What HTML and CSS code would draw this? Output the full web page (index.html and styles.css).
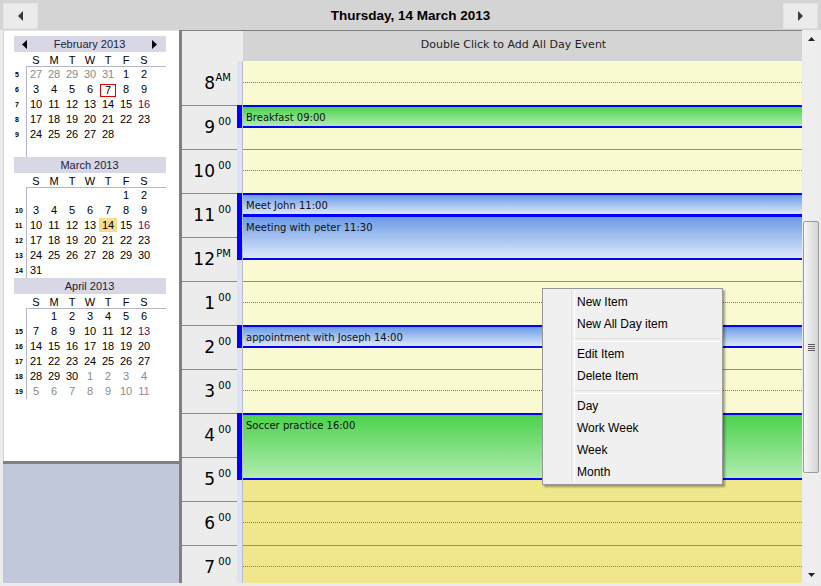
FILE: index.html
```html
<!DOCTYPE html>
<html>
<head>
<meta charset="utf-8">
<link rel="stylesheet" href="styles.css">
</head>
<body>
<div class="app">
  <div class="topbar">
    <div class="navbtn"><svg width="6" height="10" viewBox="0 0 6 10"><polygon points="5,0 5,10 0,5" fill="#3a3a3a"/></svg></div>
    <div class="title">Thursday, 14 March 2013</div>
    <div class="navbtn"><svg width="6" height="10" viewBox="0 0 6 10"><polygon points="0,0 0,10 5,5" fill="#3a3a3a"/></svg></div>
  </div>
  <div class="main">
    <div class="side">
      <div class="calpanel">
        <div class="month">
          <div class="mhead">
            <svg class="marrow" width="5" height="9" viewBox="0 0 5 9"><polygon points="5,0 5,9 0,4.5" fill="#000"/></svg>
            <span class="mtitle">February 2013</span>
            <svg class="marrow" width="5" height="9" viewBox="0 0 5 9"><polygon points="0,0 0,9 5,4.5" fill="#000"/></svg>
          </div>
          <div class="mnames"><span></span><span>S</span><span>M</span><span>T</span><span>W</span><span>T</span><span>F</span><span>S</span></div>
          <div class="mbody">
            <div class="wks"><span>5</span><span>6</span><span>7</span><span>8</span><span>9</span><span></span></div>
            <div class="days">
              <span class="g">27</span><span class="g">28</span><span class="g">29</span><span class="g">30</span><span class="g">31</span><span>1</span><span>2</span>
              <span>3</span><span>4</span><span>5</span><span>6</span><span class="today">7</span><span>8</span><span>9</span>
              <span>10</span><span>11</span><span>12</span><span>13</span><span>14</span><span>15</span><span class="p">16</span>
              <span>17</span><span>18</span><span>19</span><span>20</span><span>21</span><span>22</span><span>23</span>
              <span>24</span><span>25</span><span>26</span><span>27</span><span>28</span>
            </div>
          </div>
        </div>
        <div class="month">
          <div class="mhead"><span class="mtitle">March 2013</span></div>
          <div class="mnames"><span></span><span>S</span><span>M</span><span>T</span><span>W</span><span>T</span><span>F</span><span>S</span></div>
          <div class="mbody">
            <div class="wks"><span></span><span>10</span><span>11</span><span>12</span><span>13</span><span>14</span></div>
            <div class="days">
              <span></span><span></span><span></span><span></span><span></span><span>1</span><span>2</span>
              <span>3</span><span>4</span><span>5</span><span>6</span><span>7</span><span>8</span><span>9</span>
              <span>10</span><span>11</span><span>12</span><span>13</span><span class="sel">14</span><span>15</span><span class="p">16</span>
              <span>17</span><span>18</span><span>19</span><span>20</span><span>21</span><span>22</span><span>23</span>
              <span>24</span><span>25</span><span>26</span><span>27</span><span>28</span><span>29</span><span>30</span>
              <span>31</span>
            </div>
          </div>
        </div>
        <div class="month">
          <div class="mhead"><span class="mtitle">April 2013</span></div>
          <div class="mnames"><span></span><span>S</span><span>M</span><span>T</span><span>W</span><span>T</span><span>F</span><span>S</span></div>
          <div class="mbody">
            <div class="wks"><span></span><span>15</span><span>16</span><span>17</span><span>18</span><span>19</span></div>
            <div class="days">
              <span></span><span>1</span><span>2</span><span>3</span><span>4</span><span>5</span><span>6</span>
              <span>7</span><span>8</span><span>9</span><span>10</span><span>11</span><span>12</span><span class="p">13</span>
              <span>14</span><span>15</span><span>16</span><span>17</span><span>18</span><span>19</span><span>20</span>
              <span>21</span><span>22</span><span>23</span><span>24</span><span>25</span><span>26</span><span>27</span>
              <span>28</span><span>29</span><span>30</span><span class="g">1</span><span class="g">2</span><span class="g">3</span><span class="gb">4</span>
              <span class="g">5</span><span class="g">6</span><span class="g">7</span><span class="g">8</span><span class="g">9</span><span class="g">10</span><span class="gp">11</span>
            </div>
          </div>
        </div>
      </div>
      <div class="hsplit"></div>
      <div class="sidefill"></div>
    </div>
    <div class="vsplit"></div>
    <div class="dayview">
      <div class="dv">
        <div class="dvhead">
          <div class="dvh-time"></div>
          <div class="dvh-day">Double Click to Add All Day Event</div>
        </div>
        <div class="dvbody">
          <div class="timecol">
            <div class="tslot first"><span class="num">8</span><span class="suf">AM</span></div>
            <div class="tslot"><span class="num">9</span><span class="suf">00</span></div>
            <div class="tslot"><span class="num">10</span><span class="suf">00</span></div>
            <div class="tslot"><span class="num">11</span><span class="suf">00</span></div>
            <div class="tslot"><span class="num">12</span><span class="suf">PM</span></div>
            <div class="tslot"><span class="num">1</span><span class="suf">00</span></div>
            <div class="tslot"><span class="num">2</span><span class="suf">00</span></div>
            <div class="tslot"><span class="num">3</span><span class="suf">00</span></div>
            <div class="tslot"><span class="num">4</span><span class="suf">00</span></div>
            <div class="tslot"><span class="num">5</span><span class="suf">00</span></div>
            <div class="tslot"><span class="num">6</span><span class="suf">00</span></div>
            <div class="tslot"><span class="num">7</span><span class="suf">00</span></div>
          </div>
          <div class="strip">
            <div class="mark" style="top:44px;height:23px"></div>
            <div class="mark" style="top:132px;height:67px"></div>
            <div class="mark" style="top:264px;height:23px"></div>
            <div class="mark" style="top:352px;height:67px"></div>
          </div>
          <div class="daycol">
            <div class="dslot first"><div class="half"></div></div>
            <div class="dslot"><div class="half"></div></div>
            <div class="dslot"><div class="half"></div></div>
            <div class="dslot"><div class="half"></div></div>
            <div class="dslot"><div class="half"></div></div>
            <div class="dslot"><div class="half"></div></div>
            <div class="dslot"><div class="half"></div></div>
            <div class="dslot"><div class="half"></div></div>
            <div class="dslot"><div class="half"></div></div>
            <div class="dslot off"><div class="half"></div></div>
            <div class="dslot off"><div class="half"></div></div>
            <div class="dslot off"><div class="half"></div></div>
            <div class="ev green" style="top:44px;height:23px">Breakfast 09:00</div>
            <div class="ev blue" style="top:132px;height:23px">Meet John 11:00</div>
            <div class="ev blue" style="top:154px;height:45px">Meeting with peter 11:30</div>
            <div class="ev blue" style="top:264px;height:23px">appointment with Joseph 14:00</div>
            <div class="ev green" style="top:352px;height:67px">Soccer practice 16:00</div>
          </div>
        </div>
      </div>
      <div class="scrollbar">
        <div class="sbbtn"><svg width="7" height="4" viewBox="0 0 7 4"><polygon points="0,4 7,4 3.5,0" fill="#222"/></svg></div>
        <div class="thumb"><div class="grip"></div></div>
        <div class="sbbtn down"><svg width="7" height="4" viewBox="0 0 7 4"><polygon points="0,0 7,0 3.5,4" fill="#222"/></svg></div>
      </div>
    </div>
  </div>
  <div class="menu">
    <div class="mi">New Item</div>
    <div class="mi">New All Day item</div>
    <div class="msep"></div>
    <div class="mi">Edit Item</div>
    <div class="mi">Delete Item</div>
    <div class="msep"></div>
    <div class="mi">Day</div>
    <div class="mi">Work Week</div>
    <div class="mi">Week</div>
    <div class="mi">Month</div>
  </div>
</div>
</body>
</html>
```

FILE: styles.css
```css
* { box-sizing: border-box; }
body { margin: 0; background: #ececec; }
.app {
  position: relative;
  width: 821px;
  height: 586px;
  overflow: hidden;
  background: #ececec;
  font-family: "Liberation Sans", Arial, sans-serif;
  color: #000;
}

/* top bar */
.topbar {
  height: 30px;
  background: #d4d4d4;
  display: flex;
  align-items: flex-start;
  padding: 3px 3px 0 3px;
}
.navbtn {
  width: 35px;
  height: 26px;
  background: #ebebeb;
  border: 1px solid #e2e2e2;
  display: flex;
  align-items: center;
  justify-content: center;
}
.title {
  flex: 1;
  text-align: center;
  font-weight: bold;
  font-size: 13.5px;
  line-height: 26px;
}

/* main */
.main {
  height: 553px;
  display: flex;
  padding: 0 2px 0 3px;
}
.side {
  width: 176px;
  display: flex;
  flex-direction: column;
}
.calpanel {
  height: 431px;
  background: #fff;
  border-left: 1px solid #d6d6d6;
  border-top: 1px solid #e4e4e4;
  padding-top: 5px;
  padding-left: 10px;
}
.hsplit { height: 3px; background: #808080; }
.sidefill { flex: 1; background: #c0c8da; }
.vsplit { width: 3px; background: #808080; }

/* mini calendar */
.month { width: 152px; font-size: 11px; }
.mhead {
  height: 16px;
  background: #d7d7e5;
  display: flex;
  align-items: center;
  justify-content: center;
  padding: 0 9px 0 8px;
  color: #1c1c3a;
}
.mhead .mtitle { flex: 1; text-align: center; line-height: 16px; }
.marrow { display: block; }
.mnames {
  height: 14px;
  display: grid;
  grid-template-columns: 13px repeat(7, 18px);
  line-height: 16px;
  text-align: center;
}
.mbody { display: flex; }
.wks {
  width: 12px;
  padding-top: 1px;
  display: flex;
  flex-direction: column;
}
.wks span {
  height: 15px;
  line-height: 15px;
  font-size: 7px;
  font-weight: bold;
  padding-left: 1px;
}
.days {
  width: 140px;
  height: 91px;
  border-top: 1px solid #b4b4ca;
  border-left: 1px solid #b4b4ca;
  display: grid;
  grid-template-columns: repeat(7, 18px);
  grid-auto-rows: 15px;
  align-content: start;
}
.days span { line-height: 15px; text-align: center; }
.days .g { color: #8a8a8a; }
.days .gb { color: #7c8aa4; }
.days .gp { color: #a080a0; }
.days .p { color: #5c0a5c; }
.days .today {
  border: 1px solid #e00000;
  margin: 2px 1px 0 1px;
  line-height: 11px;
}
.days .sel { background: #f6dc8e; height: 14px; line-height: 15px; }

/* day view */
.dayview { flex: 1; display: flex; }
.dv {
  flex: 1;
  display: flex;
  flex-direction: column;
  border-top: 1px solid #808080;
}
.dvhead { height: 30px; display: flex; }
.dvh-time { width: 61px; background: #ececec; }
.dvh-day {
  flex: 1;
  background: #d4d4d4;
  font-family: "DejaVu Sans", Verdana, sans-serif;
  font-size: 11px;
  line-height: 28px;
  text-align: center;
  padding-right: 18px;
  color: #1e1e1e;
}
.dvbody { height: 522px; display: flex; overflow: hidden; }

.timecol { width: 55px; background: #ececec; }
.tslot {
  height: 44px;
  border-top: 1px solid #8a8a8a;
  display: flex;
  padding-top: 11px;
  font-family: "DejaVu Sans", Verdana, sans-serif;
}
.tslot.first { border-top-color: #ececec; }
.tslot .num {
  width: 33px;
  text-align: right;
  font-size: 17px;
  line-height: 20px;
}
.tslot .suf {
  width: 16px;
  text-align: right;
  font-size: 10px;
  line-height: 11px;
  margin-top: -1px;
}

.strip {
  width: 6px;
  position: relative;
  background: #dde3f4;
  border-right: 1px solid #b9bdc9;
}
.mark { position: absolute; left: 0; width: 5px; background: #0000ff; }

.daycol { flex: 1; position: relative; }
.dslot {
  height: 44px;
  background: #fafad2;
  border-top: 1px solid #8f8f8f;
}
.dslot.first { border-top-color: transparent; }
.dslot.off { background: #f0e68c; }
.half { height: 21px; border-bottom: 1px dotted #7a7a7a; }

.ev {
  position: absolute;
  left: 0;
  right: 0;
  border-top: 2px solid #0000ff;
  border-bottom: 2px solid #0000ff;
  padding: 5px 3px 0 3px;
  font-family: "DejaVu Sans", Verdana, sans-serif;
  font-size: 10px;
  line-height: 12px;
  color: #111;
  white-space: nowrap;
  overflow: hidden;
}
.ev.green { background: linear-gradient(#4cd24c, #b0ecb0); }
.ev.blue { background: linear-gradient(#6b9be6, #dce8f9); }

/* scrollbar */
.scrollbar {
  width: 16px;
  margin-left: 1px;
  background: #eeeeee;
  display: flex;
  flex-direction: column;
}
.sbbtn {
  height: 17px;
  display: flex;
  align-items: center;
  justify-content: center;
}
.sbbtn.down { margin-top: auto; }
.thumb {
  margin-top: 174px;
  height: 252px;
  border: 1px solid #9c9c9c;
  border-radius: 2px;
  background: linear-gradient(to right, #f6f6f6, #e2e2e2 60%, #d4d4d4);
  display: flex;
  align-items: center;
  justify-content: center;
}
.grip {
  width: 7px;
  height: 7px;
  background: repeating-linear-gradient(#5a5a5a 0 1px, transparent 1px 2px);
}

/* context menu */
.menu {
  position: absolute;
  left: 542px;
  top: 288px;
  width: 181px;
  border: 1px solid #979797;
  background: #f0f0f0;
  padding: 2px 2px 1px 2px;
  box-shadow: 2px 2px 2px rgba(0, 0, 0, 0.35);
  font-family: "Liberation Sans", Arial, sans-serif;
  font-size: 12px;
}
.menu::before {
  content: "";
  position: absolute;
  left: 28px;
  top: 1px;
  bottom: 1px;
  width: 2px;
  border-left: 1px solid #e2e3e3;
  border-right: 1px solid #ffffff;
}
.mi { height: 22px; line-height: 22px; padding-left: 32px; }
.msep {
  height: 8px;
  margin-left: 28px;
  padding-top: 3px;
}
.msep::after {
  content: "";
  display: block;
  height: 2px;
  border-top: 1px solid #e0e0e0;
  border-bottom: 1px solid #ffffff;
}
```
